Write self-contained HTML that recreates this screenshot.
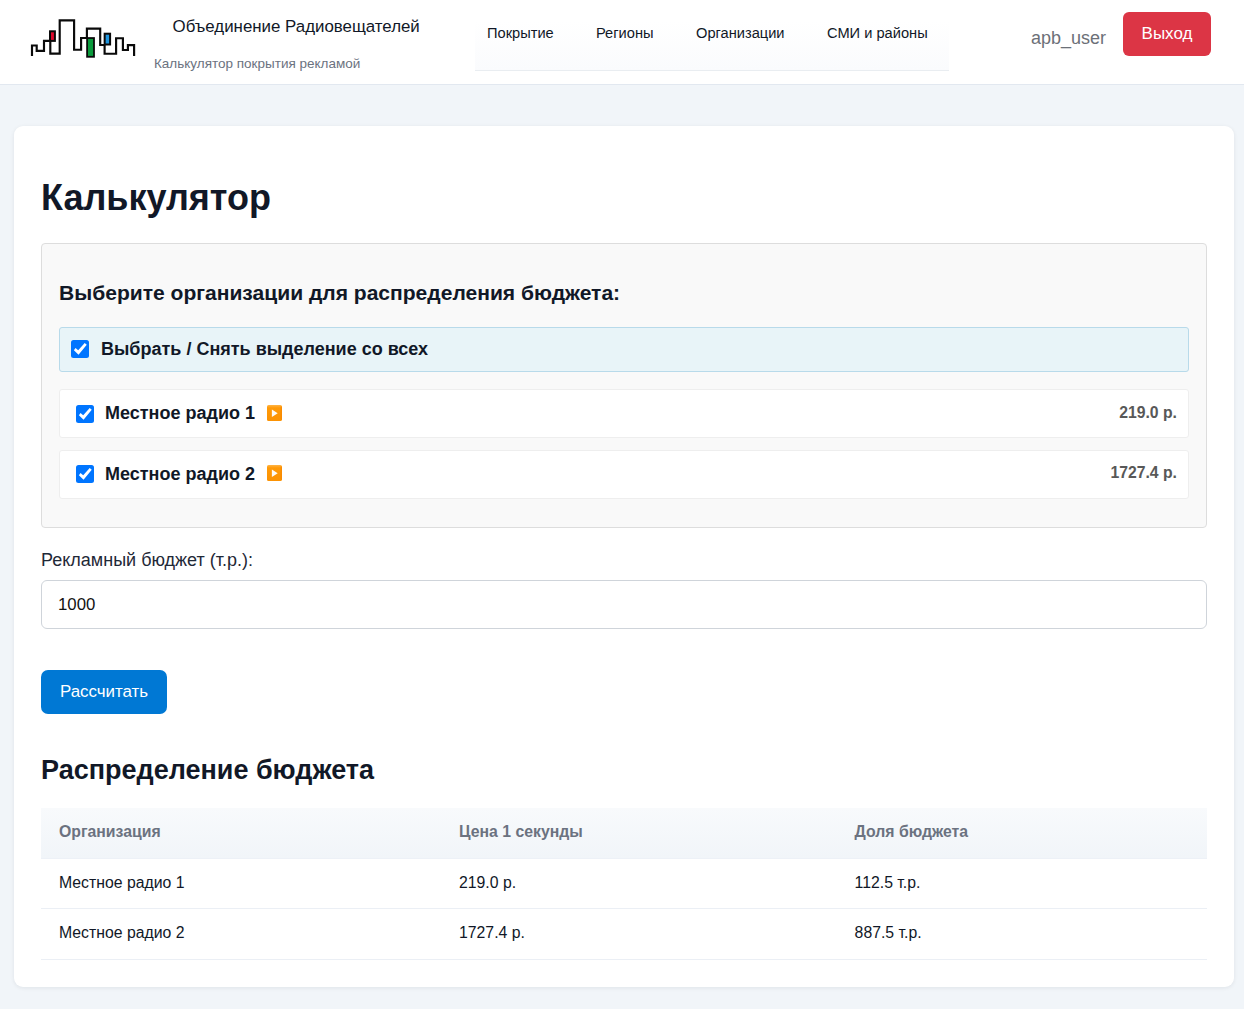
<!DOCTYPE html>
<html lang="ru">
<head>
<meta charset="utf-8">
<title>Калькулятор</title>
<style>
*{box-sizing:border-box;}
html,body{margin:0;padding:0;}
body{width:1244px;height:1009px;overflow:hidden;background:#f1f5f9;font-family:"Liberation Sans",sans-serif;color:#111827;position:relative;}
.header{position:absolute;left:0;top:0;width:1244px;height:85px;background:#fff;border-bottom:1px solid #e2e8f0;}
.logo{position:absolute;left:20px;top:10px;width:130px;height:60px;}
.brand{position:absolute;left:172.6px;top:17px;font-size:16.86px;line-height:19px;color:#111827;white-space:nowrap;}
.sub{position:absolute;left:154px;top:56px;font-size:13.5px;line-height:15px;color:#6b7280;white-space:nowrap;}
.nav{position:absolute;left:475px;top:0;width:474px;height:71px;border-bottom:1px solid #e9edf1;background:linear-gradient(#ffffff 30%,#fafbfd 100%);}
.nav a{position:absolute;top:24px;font-size:14.65px;line-height:18px;color:#111827;text-decoration:none;white-space:nowrap;}
.user{position:absolute;left:1031px;top:27px;font-size:18px;line-height:22px;color:#6c7078;white-space:nowrap;}
.logout{position:absolute;left:1123px;top:12px;width:88px;height:44px;background:#dc3545;border-radius:6px;color:#fff;font-size:17px;line-height:44px;text-align:center;}
.card{position:absolute;left:14px;top:126px;width:1220px;height:861px;background:#fff;border-radius:9px;box-shadow:0 1px 4px rgba(15,23,42,.08);}
h1{position:absolute;left:41px;top:177px;margin:0;font-size:36px;line-height:41px;font-weight:bold;color:#111827;white-space:nowrap;}
.box{position:absolute;left:41px;top:243px;width:1166px;height:285px;background:#f9f9f9;border:1px solid #ddd;border-radius:4px;}
h3{position:absolute;left:59px;top:281px;margin:0;font-size:21.06px;line-height:23px;font-weight:bold;color:#111827;white-space:nowrap;}
.selall{position:absolute;left:59px;top:327px;width:1130px;height:45px;background:#e8f4f8;border:1px solid #b8daea;border-radius:3px;}
.row{position:absolute;left:59px;width:1130px;height:49px;background:#fff;border:1px solid #eeeeee;border-radius:3px;}
.cb{position:absolute;width:18px;height:18px;background:#0075ff;border-radius:2.5px;}
.cb svg{position:absolute;left:0;top:0;width:18px;height:18px;}
.lbl{position:absolute;font-weight:bold;font-size:18px;line-height:22px;color:#111827;white-space:nowrap;}
.price{position:absolute;right:11px;font-weight:bold;font-size:15.75px;line-height:17px;color:#585858;white-space:nowrap;}
.play{position:absolute;width:15px;height:16px;}
.flabel{position:absolute;left:41px;top:549px;font-size:18px;line-height:22px;color:#1f2937;white-space:nowrap;}
.input{position:absolute;left:41px;top:580px;width:1166px;height:49px;border:1px solid #cfd4da;border-radius:6px;background:#fff;font-size:16.8px;line-height:47px;padding-left:16px;color:#111;}
.btn{position:absolute;left:41px;top:670px;width:126px;height:44px;background:#0078d4;border-radius:7px;color:#fff;font-size:16.9px;line-height:43px;text-align:center;}
h2{position:absolute;left:41px;top:753px;margin:0;font-size:27px;line-height:34px;font-weight:bold;color:#111827;white-space:nowrap;}
.thead{position:absolute;left:41px;top:808px;width:1166px;height:50px;background:linear-gradient(#f8fafc,#f1f5f9);}
.hr{position:absolute;left:41px;width:1166px;height:1px;background:#ebeff5;}
.th{position:absolute;top:823px;font-weight:bold;font-size:15.8px;line-height:17px;color:#6b7280;white-space:nowrap;}
.td{position:absolute;font-size:15.8px;line-height:17px;color:#111827;white-space:nowrap;}
</style>
</head>
<body>
<div class="header">
  <svg class="logo" viewBox="20 10 130 60">
    <path d="M32 56 V45.5 H36.7 V50.8 H44 V40.8 H50.3 V53.6 H59.7 V20.4 H74.1 V49.7 H81.1 V38 H86.9 V28.6 H100.2 V45 H104.6 V53.7 H116.1 V38.2 H122.9 V50 H127.9 V45.1 H134.1 V56" fill="none" stroke="#0a0a0a" stroke-width="2.15" stroke-linejoin="miter"/>
    <rect x="50" y="31.3" width="4.9" height="9.6" fill="#de0a2e" stroke="#0a0a0a" stroke-width="2"/>
    <rect x="87.1" y="38.05" width="6.9" height="18.75" fill="#0a9b3c" stroke="#0a0a0a" stroke-width="1.8"/>
    <rect x="104.66" y="33.7" width="5.44" height="10.8" fill="#1e96e0" stroke="#0a0a0a" stroke-width="2"/>
  </svg>
  <div class="brand">Объединение Радиовещателей</div>
  <div class="sub">Калькулятор покрытия рекламой</div>
  <div class="nav">
    <a style="left:12px">Покрытие</a>
    <a style="left:121px">Регионы</a>
    <a style="left:221px">Организации</a>
    <a style="left:352px">СМИ и районы</a>
  </div>
  <div class="user">apb_user</div>
  <div class="logout">Выход</div>
</div>

<div class="card"></div>
<h1>Калькулятор</h1>
<div class="box"></div>
<h3>Выберите организации для распределения бюджета:</h3>

<div class="selall">
  <div class="cb" style="left:11px;top:12px"><svg viewBox="0 0 18 18"><path d="M2.9 10.3 L4.5 8 L7.2 10.3 L13.7 3.05 L15.75 4.66 L7.56 14.8 Z" fill="#fff"/></svg></div>
  <div class="lbl" style="left:41px;top:10px">Выбрать / Снять выделение со всех</div>
</div>

<div class="row" style="top:389px">
  <div class="cb" style="left:16px;top:15px"><svg viewBox="0 0 18 18"><path d="M2.9 10.3 L4.5 8 L7.2 10.3 L13.7 3.05 L15.75 4.66 L7.56 14.8 Z" fill="#fff"/></svg></div>
  <div class="lbl" style="left:45px;top:12px">Местное радио 1</div>
  <svg class="play" style="left:207px;top:15px" viewBox="0 0 15 16"><defs><linearGradient id="pg1" x1="0" y1="0" x2="0" y2="1"><stop offset="0" stop-color="#ffb445"/><stop offset="0.18" stop-color="#ff9a08"/><stop offset="1" stop-color="#fb9203"/></linearGradient></defs><rect x="0" y="0" width="15" height="16" rx="1.6" fill="url(#pg1)"/><rect x="13.6" y="1.5" width="1.4" height="13" fill="#f78600" opacity=".7"/><path d="M4.9 4.5 L10.7 8.2 L4.9 12 Z" fill="#fdfaf5"/></svg>
  <div class="price" style="top:14px">219.0 р.</div>
</div>

<div class="row" style="top:450px">
  <div class="cb" style="left:16px;top:14px"><svg viewBox="0 0 18 18"><path d="M2.9 10.3 L4.5 8 L7.2 10.3 L13.7 3.05 L15.75 4.66 L7.56 14.8 Z" fill="#fff"/></svg></div>
  <div class="lbl" style="left:45px;top:12px">Местное радио 2</div>
  <svg class="play" style="left:207px;top:14px" viewBox="0 0 15 16"><defs><linearGradient id="pg2" x1="0" y1="0" x2="0" y2="1"><stop offset="0" stop-color="#ffb445"/><stop offset="0.18" stop-color="#ff9a08"/><stop offset="1" stop-color="#fb9203"/></linearGradient></defs><rect x="0" y="0" width="15" height="16" rx="1.6" fill="url(#pg2)"/><rect x="13.6" y="1.5" width="1.4" height="13" fill="#f78600" opacity=".7"/><path d="M4.9 4.5 L10.7 8.2 L4.9 12 Z" fill="#fdfaf5"/></svg>
  <div class="price" style="top:13px">1727.4 р.</div>
</div>

<div class="flabel">Рекламный бюджет (т.р.):</div>
<div class="input">1000</div>
<div class="btn">Рассчитать</div>

<h2>Распределение бюджета</h2>
<div class="thead"></div>
<div class="hr" style="top:858px;background:#edf1f7"></div>
<div class="hr" style="top:908px"></div>
<div class="hr" style="top:959px"></div>
<div class="th" style="left:59px">Организация</div>
<div class="th" style="left:459px">Цена 1 секунды</div>
<div class="th" style="left:854.6px">Доля бюджета</div>
<div class="td" style="left:59px;top:874px">Местное радио 1</div>
<div class="td" style="left:459px;top:874px">219.0 р.</div>
<div class="td" style="left:854.6px;top:874px">112.5 т.р.</div>
<div class="td" style="left:59px;top:924px">Местное радио 2</div>
<div class="td" style="left:459px;top:924px">1727.4 р.</div>
<div class="td" style="left:854.6px;top:924px">887.5 т.р.</div>
</body>
</html>
